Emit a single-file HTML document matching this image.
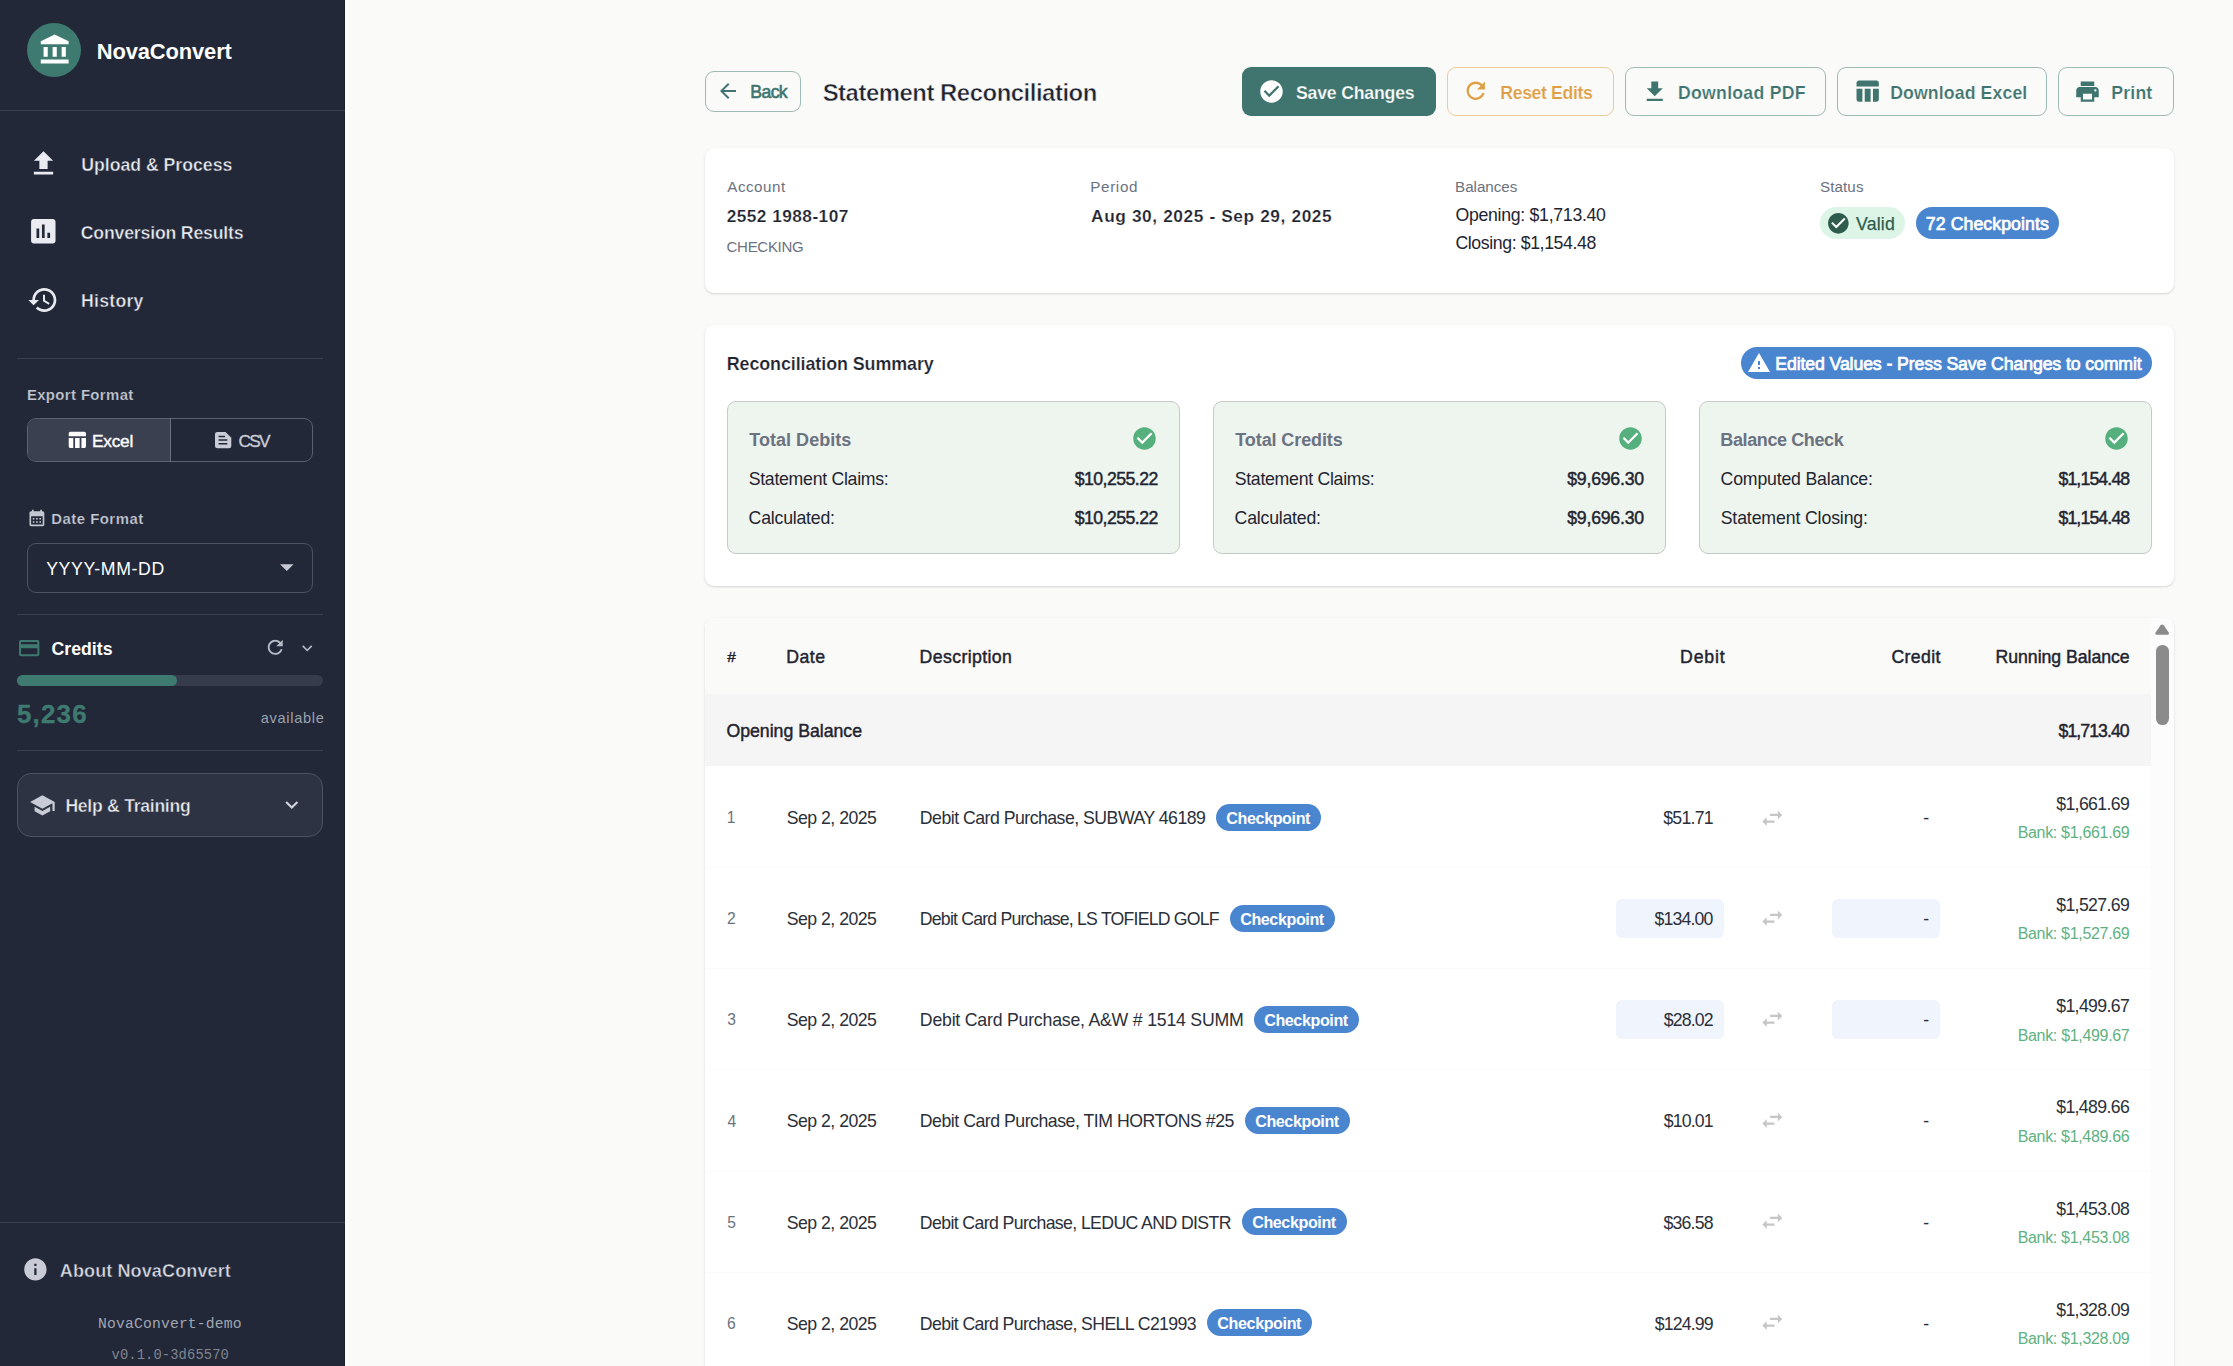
<!DOCTYPE html>
<html lang="en"><head><meta charset="utf-8"><title>NovaConvert - Statement Reconciliation</title>
<style>
html,body{margin:0;padding:0;}
body{width:2233px;height:1366px;overflow:hidden;background:#fafaf9;position:relative;font-family:"Liberation Sans",sans-serif;}
#app{position:absolute;left:0;top:0;width:2233px;height:1366px;overflow:hidden;}
.t{position:absolute;white-space:nowrap;margin:0;padding:0;}
.ls{font-family:"Liberation Sans",sans-serif;}
.lm{font-family:"Liberation Mono",monospace;}
.b{position:absolute;}
.i{position:absolute;display:block;overflow:visible;}
</style></head><body><div id="app">
<!-- table -->
<div class="b" style="left:705px;top:617.5px;width:1469.00px;height:802.50px;background:#fff;border-radius:9px;box-shadow:0 1px 3px rgba(0,0,0,.10),0 1px 2px rgba(0,0,0,.06);overflow:hidden;"></div>
<div class="b" style="left:705px;top:617.5px;width:1446.00px;height:76.80px;background:#fafaf9;border-radius:9px 0 0 0;"></div>
<div class="t ls" style="left:727.32px;top:648.00px;height:17px;line-height:17px;font-size:15.4px;letter-spacing:-0.724px;color:#1f2430;-webkit-text-stroke:0.45px #1f2430;">#</div>
<div class="t ls" style="left:786.14px;top:647.00px;height:20px;line-height:20px;font-size:17.7px;letter-spacing:0.522px;color:#1f2430;-webkit-text-stroke:0.45px #1f2430;">Date</div>
<div class="t ls" style="left:919.54px;top:647.00px;height:20px;line-height:20px;font-size:17.7px;letter-spacing:0.387px;color:#1f2430;-webkit-text-stroke:0.45px #1f2430;">Description</div>
<div class="t ls" style="left:1680.04px;top:647.00px;height:20px;line-height:20px;font-size:17.7px;letter-spacing:0.841px;color:#1f2430;-webkit-text-stroke:0.45px #1f2430;">Debit</div>
<div class="t ls" style="left:1891.51px;top:647.00px;height:20px;line-height:20px;font-size:17.7px;letter-spacing:0.341px;color:#1f2430;-webkit-text-stroke:0.45px #1f2430;">Credit</div>
<div class="t ls" style="left:1995.54px;top:647.00px;height:20px;line-height:20px;font-size:17.7px;letter-spacing:-0.041px;color:#1f2430;-webkit-text-stroke:0.45px #1f2430;">Running Balance</div>
<div class="b" style="left:705px;top:694.3px;width:1446.00px;height:71.70px;background:#f5f5f5;"></div>
<div class="t ls" style="left:726.46px;top:721.00px;height:20px;line-height:20px;font-size:17.7px;letter-spacing:-0.008px;color:#1f2430;-webkit-text-stroke:0.45px #1f2430;">Opening Balance</div>
<div class="t ls" style="left:2058.62px;top:721.00px;height:20px;line-height:20px;font-size:17.7px;letter-spacing:-0.960px;color:#1f2430;-webkit-text-stroke:0.45px #1f2430;">$1,713.40</div>
<div class="b" style="left:2151px;top:617.5px;width:23.00px;height:748.50px;background:#fcfcfc;border-radius:0 9px 0 0;"></div>
<svg class="i" style="left:2155.2px;top:624.4px;width:14.3px;height:10.8px" viewBox="0 0 14 11"><path fill="#8b8b8b" d="M5.400 1.300a2 2 0 0 1 3.200 0L13.700 8.700c.6.900.1 2.300-1.200 2.300H1.500C.2 11-.3 9.600.3 8.700z"/></svg>
<div class="b" style="left:2156px;top:645.2px;width:12.70px;height:79.40px;background:#8b8b8b;border-radius:6.4px;"></div>
<div class="t ls" style="left:726.73px;top:809.00px;height:17px;line-height:17px;font-size:15.6px;letter-spacing:-0.733px;color:#6b7280;">1</div>
<div class="t ls" style="left:786.70px;top:808.00px;height:20px;line-height:20px;font-size:17.7px;letter-spacing:-0.514px;color:#2a2f39;">Sep 2, 2025</div>
<div class="t ls" style="left:919.84px;top:808.00px;height:20px;line-height:20px;font-size:17.7px;letter-spacing:-0.513px;color:#2a2f39;">Debit Card Purchase, SUBWAY 46189</div>
<div class="b" style="left:1216.0px;top:804px;width:104.80px;height:26.80px;background:#4a86cf;border-radius:14px;"></div>
<div class="t ls" style="left:1226.36px;top:809.00px;height:18px;line-height:18px;font-size:16.1px;letter-spacing:-0.395px;color:#ffffff;font-weight:700;">Checkpoint</div>
<div class="t ls" style="left:1663.22px;top:808.00px;height:20px;line-height:20px;font-size:17.7px;letter-spacing:-0.740px;color:#2a2f39;">$51.71</div>
<svg class="i" style="left:1759.20px;top:804.50px;width:26.6px;height:26.6px" viewBox="0 0 24 24"><path fill="#c6c6c6" d="M6.99 11 3 15l3.99 4v-3H14v-2H6.99zM21 9l-3.99-4v3H10v2h7.01v3z"/></svg>
<div class="t ls" style="left:1923.24px;top:808.00px;height:20px;line-height:20px;font-size:17.7px;letter-spacing:-0.832px;color:#2a2f39;">-</div>
<div class="t ls" style="left:2056.22px;top:794.00px;height:20px;line-height:20px;font-size:17.7px;letter-spacing:-0.643px;color:#2a2f39;">$1,661.69</div>
<div class="t ls" style="left:2017.68px;top:824.00px;height:17px;line-height:17px;font-size:16.0px;letter-spacing:-0.320px;color:#5fb181;">Bank: $1,661.69</div>
<div class="b" style="left:705px;top:866.5px;width:1446.00px;height:1.00px;background:#fbfbfb;"></div>
<div class="t ls" style="left:727.12px;top:910.00px;height:17px;line-height:17px;font-size:15.6px;letter-spacing:-0.733px;color:#6b7280;">2</div>
<div class="t ls" style="left:786.70px;top:909.00px;height:20px;line-height:20px;font-size:17.7px;letter-spacing:-0.514px;color:#2a2f39;">Sep 2, 2025</div>
<div class="t ls" style="left:919.84px;top:909.00px;height:20px;line-height:20px;font-size:17.7px;letter-spacing:-0.799px;color:#2a2f39;">Debit Card Purchase, LS TOFIELD GOLF</div>
<div class="b" style="left:1229.8px;top:905px;width:104.80px;height:26.80px;background:#4a86cf;border-radius:14px;"></div>
<div class="t ls" style="left:1240.16px;top:910.00px;height:18px;line-height:18px;font-size:16.1px;letter-spacing:-0.395px;color:#ffffff;font-weight:700;">Checkpoint</div>
<div class="b" style="left:1616px;top:899px;width:108.00px;height:38.50px;background:#eff4fd;border-radius:6px;"></div>
<div class="b" style="left:1832px;top:899px;width:108.00px;height:38.50px;background:#eff4fd;border-radius:6px;"></div>
<div class="t ls" style="left:1654.51px;top:909.00px;height:20px;line-height:20px;font-size:17.7px;letter-spacing:-0.832px;color:#2a2f39;">$134.00</div>
<svg class="i" style="left:1759.20px;top:905.47px;width:26.6px;height:26.6px" viewBox="0 0 24 24"><path fill="#c6c6c6" d="M6.99 11 3 15l3.99 4v-3H14v-2H6.99zM21 9l-3.99-4v3H10v2h7.01v3z"/></svg>
<div class="t ls" style="left:1923.24px;top:909.00px;height:20px;line-height:20px;font-size:17.7px;letter-spacing:-0.832px;color:#2a2f39;">-</div>
<div class="t ls" style="left:2056.22px;top:895.00px;height:20px;line-height:20px;font-size:17.7px;letter-spacing:-0.643px;color:#2a2f39;">$1,527.69</div>
<div class="t ls" style="left:2017.68px;top:925.00px;height:17px;line-height:17px;font-size:16.0px;letter-spacing:-0.320px;color:#5fb181;">Bank: $1,527.69</div>
<div class="b" style="left:705px;top:968.0px;width:1446.00px;height:1.00px;background:#fbfbfb;"></div>
<div class="t ls" style="left:727.31px;top:1011.00px;height:17px;line-height:17px;font-size:15.6px;letter-spacing:-0.733px;color:#6b7280;">3</div>
<div class="t ls" style="left:786.70px;top:1010.00px;height:20px;line-height:20px;font-size:17.7px;letter-spacing:-0.514px;color:#2a2f39;">Sep 2, 2025</div>
<div class="t ls" style="left:919.84px;top:1010.00px;height:20px;line-height:20px;font-size:17.7px;letter-spacing:-0.210px;color:#2a2f39;">Debit Card Purchase, A&amp;W # 1514 SUMM</div>
<div class="b" style="left:1253.8px;top:1006px;width:104.80px;height:26.80px;background:#4a86cf;border-radius:14px;"></div>
<div class="t ls" style="left:1264.16px;top:1011.00px;height:18px;line-height:18px;font-size:16.1px;letter-spacing:-0.395px;color:#ffffff;font-weight:700;">Checkpoint</div>
<div class="b" style="left:1616px;top:1000px;width:108.00px;height:38.50px;background:#eff4fd;border-radius:6px;"></div>
<div class="b" style="left:1832px;top:1000px;width:108.00px;height:38.50px;background:#eff4fd;border-radius:6px;"></div>
<div class="t ls" style="left:1663.68px;top:1010.00px;height:20px;line-height:20px;font-size:17.7px;letter-spacing:-0.832px;color:#2a2f39;">$28.02</div>
<svg class="i" style="left:1759.20px;top:1006.44px;width:26.6px;height:26.6px" viewBox="0 0 24 24"><path fill="#c6c6c6" d="M6.99 11 3 15l3.99 4v-3H14v-2H6.99zM21 9l-3.99-4v3H10v2h7.01v3z"/></svg>
<div class="t ls" style="left:1923.24px;top:1010.00px;height:20px;line-height:20px;font-size:17.7px;letter-spacing:-0.832px;color:#2a2f39;">-</div>
<div class="t ls" style="left:2056.22px;top:996.00px;height:20px;line-height:20px;font-size:17.7px;letter-spacing:-0.638px;color:#2a2f39;">$1,499.67</div>
<div class="t ls" style="left:2017.68px;top:1027.00px;height:17px;line-height:17px;font-size:16.0px;letter-spacing:-0.317px;color:#5fb181;">Bank: $1,499.67</div>
<div class="b" style="left:705px;top:1069.0px;width:1446.00px;height:1.00px;background:#fbfbfb;"></div>
<div class="t ls" style="left:727.55px;top:1113.00px;height:17px;line-height:17px;font-size:15.6px;letter-spacing:-0.733px;color:#6b7280;">4</div>
<div class="t ls" style="left:786.70px;top:1111.00px;height:20px;line-height:20px;font-size:17.7px;letter-spacing:-0.514px;color:#2a2f39;">Sep 2, 2025</div>
<div class="t ls" style="left:919.84px;top:1111.00px;height:20px;line-height:20px;font-size:17.7px;letter-spacing:-0.479px;color:#2a2f39;">Debit Card Purchase, TIM HORTONS #25</div>
<div class="b" style="left:1244.8px;top:1107px;width:104.80px;height:26.80px;background:#4a86cf;border-radius:14px;"></div>
<div class="t ls" style="left:1255.16px;top:1112.00px;height:18px;line-height:18px;font-size:16.1px;letter-spacing:-0.395px;color:#ffffff;font-weight:700;">Checkpoint</div>
<div class="t ls" style="left:1663.68px;top:1111.00px;height:20px;line-height:20px;font-size:17.7px;letter-spacing:-0.832px;color:#2a2f39;">$10.01</div>
<svg class="i" style="left:1759.20px;top:1107.41px;width:26.6px;height:26.6px" viewBox="0 0 24 24"><path fill="#c6c6c6" d="M6.99 11 3 15l3.99 4v-3H14v-2H6.99zM21 9l-3.99-4v3H10v2h7.01v3z"/></svg>
<div class="t ls" style="left:1923.24px;top:1111.00px;height:20px;line-height:20px;font-size:17.7px;letter-spacing:-0.832px;color:#2a2f39;">-</div>
<div class="t ls" style="left:2056.22px;top:1097.00px;height:20px;line-height:20px;font-size:17.7px;letter-spacing:-0.649px;color:#2a2f39;">$1,489.66</div>
<div class="t ls" style="left:2017.68px;top:1128.00px;height:17px;line-height:17px;font-size:16.0px;letter-spacing:-0.323px;color:#5fb181;">Bank: $1,489.66</div>
<div class="b" style="left:705px;top:1170.5px;width:1446.00px;height:1.00px;background:#fbfbfb;"></div>
<div class="t ls" style="left:727.28px;top:1214.00px;height:17px;line-height:17px;font-size:15.6px;letter-spacing:-0.733px;color:#6b7280;">5</div>
<div class="t ls" style="left:786.70px;top:1213.00px;height:20px;line-height:20px;font-size:17.7px;letter-spacing:-0.514px;color:#2a2f39;">Sep 2, 2025</div>
<div class="t ls" style="left:919.84px;top:1213.00px;height:20px;line-height:20px;font-size:17.7px;letter-spacing:-0.616px;color:#2a2f39;">Debit Card Purchase, LEDUC AND DISTR</div>
<div class="b" style="left:1241.8px;top:1208px;width:104.80px;height:26.80px;background:#4a86cf;border-radius:14px;"></div>
<div class="t ls" style="left:1252.16px;top:1213.00px;height:18px;line-height:18px;font-size:16.1px;letter-spacing:-0.395px;color:#ffffff;font-weight:700;">Checkpoint</div>
<div class="t ls" style="left:1663.59px;top:1213.00px;height:20px;line-height:20px;font-size:17.7px;letter-spacing:-0.832px;color:#2a2f39;">$36.58</div>
<svg class="i" style="left:1759.20px;top:1208.38px;width:26.6px;height:26.6px" viewBox="0 0 24 24"><path fill="#c6c6c6" d="M6.99 11 3 15l3.99 4v-3H14v-2H6.99zM21 9l-3.99-4v3H10v2h7.01v3z"/></svg>
<div class="t ls" style="left:1923.24px;top:1213.00px;height:20px;line-height:20px;font-size:17.7px;letter-spacing:-0.832px;color:#2a2f39;">-</div>
<div class="t ls" style="left:2056.22px;top:1199.00px;height:20px;line-height:20px;font-size:17.7px;letter-spacing:-0.649px;color:#2a2f39;">$1,453.08</div>
<div class="t ls" style="left:2017.68px;top:1229.00px;height:17px;line-height:17px;font-size:16.0px;letter-spacing:-0.323px;color:#5fb181;">Bank: $1,453.08</div>
<div class="b" style="left:705px;top:1271.5px;width:1446.00px;height:1.00px;background:#fbfbfb;"></div>
<div class="t ls" style="left:727.12px;top:1315.00px;height:17px;line-height:17px;font-size:15.6px;letter-spacing:-0.733px;color:#6b7280;">6</div>
<div class="t ls" style="left:786.70px;top:1314.00px;height:20px;line-height:20px;font-size:17.7px;letter-spacing:-0.514px;color:#2a2f39;">Sep 2, 2025</div>
<div class="t ls" style="left:919.84px;top:1314.00px;height:20px;line-height:20px;font-size:17.7px;letter-spacing:-0.608px;color:#2a2f39;">Debit Card Purchase, SHELL C21993</div>
<div class="b" style="left:1207.0px;top:1309px;width:104.80px;height:26.80px;background:#4a86cf;border-radius:14px;"></div>
<div class="t ls" style="left:1217.36px;top:1314.00px;height:18px;line-height:18px;font-size:16.1px;letter-spacing:-0.395px;color:#ffffff;font-weight:700;">Checkpoint</div>
<div class="t ls" style="left:1654.65px;top:1314.00px;height:20px;line-height:20px;font-size:17.7px;letter-spacing:-0.832px;color:#2a2f39;">$124.99</div>
<svg class="i" style="left:1759.20px;top:1309.35px;width:26.6px;height:26.6px" viewBox="0 0 24 24"><path fill="#c6c6c6" d="M6.99 11 3 15l3.99 4v-3H14v-2H6.99zM21 9l-3.99-4v3H10v2h7.01v3z"/></svg>
<div class="t ls" style="left:1923.24px;top:1314.00px;height:20px;line-height:20px;font-size:17.7px;letter-spacing:-0.832px;color:#2a2f39;">-</div>
<div class="t ls" style="left:2056.22px;top:1300.00px;height:20px;line-height:20px;font-size:17.7px;letter-spacing:-0.643px;color:#2a2f39;">$1,328.09</div>
<div class="t ls" style="left:2017.68px;top:1330.00px;height:17px;line-height:17px;font-size:16.0px;letter-spacing:-0.320px;color:#5fb181;">Bank: $1,328.09</div>
<!-- top -->
<div class="b" style="left:705px;top:71px;width:95.50px;height:41.00px;border:1px solid #9fb9b4;border-radius:9px;box-sizing:border-box;"></div>
<svg class="i" style="left:716.20px;top:79.10px;width:24px;height:24px" viewBox="0 0 24 24"><path fill="#3f756e" d="M20 11H7.83l5.59-5.59L12 4l-8 8 8 8 1.41-1.41L7.83 13H20z"/></svg>
<div class="t ls" style="left:750.34px;top:82.00px;height:20px;line-height:20px;font-size:17.7px;letter-spacing:-0.659px;color:#3f756e;-webkit-text-stroke:0.6px #3f756e;">Back</div>
<div class="t ls" style="left:822.64px;top:79.00px;height:27px;line-height:27px;font-size:23.9px;letter-spacing:-0.468px;color:#1f2430;font-weight:700;-webkit-text-stroke:0.5px #fafaf9;">Statement Reconciliation</div>
<div class="b" style="left:1242px;top:67px;width:194.00px;height:48.50px;background:#3f756e;border-radius:9px;"></div>
<svg class="i" style="left:1258.00px;top:77.80px;width:27px;height:27px" viewBox="0 0 24 24"><circle cx="12" cy="12" r="8.5" fill="#3f756e"/><path fill="#ffffff" d="M12 2C6.48 2 2 6.48 2 12s4.48 10 10 10 10-4.48 10-10S17.52 2 12 2m-2 15-5-5 1.41-1.41L10 14.17l7.59-7.59L19 8z"/></svg>
<div class="t ls" style="left:1296.01px;top:83.00px;height:20px;line-height:20px;font-size:17.7px;letter-spacing:-0.208px;color:#ffffff;font-weight:700;-webkit-text-stroke:0.25px #3f756e;">Save Changes</div>
<div class="b" style="left:1447px;top:67px;width:167.00px;height:48.50px;border:1px solid #eccb9b;border-radius:9px;box-sizing:border-box;"></div>
<svg class="i" style="left:1461.75px;top:77.45px;width:27.5px;height:27.5px" viewBox="0 0 24 24"><path fill="#dfa045" d="M17.65 6.35C16.2 4.9 14.21 4 12 4c-4.42 0-7.99 3.58-7.99 8s3.57 8 7.99 8c3.73 0 6.84-2.55 7.73-6h-2.08c-.82 2.33-3.04 4-5.65 4-3.31 0-6-2.69-6-6s2.69-6 6-6c1.66 0 3.14.69 4.22 1.78L13 11h7V4z"/></svg>
<div class="t ls" style="left:1500.31px;top:83.00px;height:20px;line-height:20px;font-size:17.7px;letter-spacing:-0.377px;color:#dfa045;font-weight:700;-webkit-text-stroke:0.19px #fafaf9;">Reset Edits</div>
<div class="b" style="left:1625px;top:67px;width:201.00px;height:48.50px;border:1px solid #9fb9b4;border-radius:9px;box-sizing:border-box;"></div>
<svg class="i" style="left:1640.75px;top:77.55px;width:27.5px;height:27.5px" viewBox="0 0 24 24"><path fill="#3f756e" d="M5 20h14v-2H5zM19 9h-4V3H9v6H5l7 7z"/></svg>
<div class="t ls" style="left:1678.01px;top:83.00px;height:20px;line-height:20px;font-size:17.7px;letter-spacing:0.249px;color:#3f756e;font-weight:700;-webkit-text-stroke:0.19px #fafaf9;">Download PDF</div>
<div class="b" style="left:1837px;top:67px;width:210.00px;height:48.50px;border:1px solid #9fb9b4;border-radius:9px;box-sizing:border-box;"></div>
<svg class="i" style="left:1852.50px;top:77.30px;width:28.2px;height:28.2px" viewBox="0 0 24 24"><path fill="#3f756e" d="M10 10.02h5V21h-5zM17 21h3c1.1 0 2-.9 2-2v-9h-5zm3-18H5c-1.1 0-2 .9-2 2v3h19V5c0-1.1-.9-2-2-2M3 19c0 1.1.9 2 2 2h3V10H3z"/></svg>
<div class="t ls" style="left:1890.21px;top:83.00px;height:20px;line-height:20px;font-size:17.7px;letter-spacing:0.109px;color:#3f756e;font-weight:700;-webkit-text-stroke:0.19px #fafaf9;">Download Excel</div>
<div class="b" style="left:2058px;top:67px;width:116.00px;height:48.50px;border:1px solid #9fb9b4;border-radius:9px;box-sizing:border-box;"></div>
<svg class="i" style="left:2074.00px;top:78.20px;width:27px;height:27px" viewBox="0 0 24 24"><path fill="#3f756e" d="M19 8H5c-1.66 0-3 1.34-3 3v6h4v4h12v-4h4v-6c0-1.66-1.34-3-3-3m-3 11H8v-5h8zm3-7c-.55 0-1-.45-1-1s.45-1 1-1 1 .45 1 1-.45 1-1 1m-1-9H6v4h12z"/></svg>
<div class="t ls" style="left:2111.31px;top:83.00px;height:20px;line-height:20px;font-size:17.7px;letter-spacing:0.165px;color:#3f756e;font-weight:700;-webkit-text-stroke:0.19px #fafaf9;">Print</div>
<div class="b" style="left:705px;top:148.3px;width:1469.00px;height:144.70px;background:#fff;border-radius:9px;box-shadow:0 1px 3px rgba(0,0,0,.10),0 1px 2px rgba(0,0,0,.06);"></div>
<div class="t ls" style="left:727.26px;top:178.00px;height:17px;line-height:17px;font-size:15.2px;letter-spacing:0.507px;color:#6b7280;">Account</div>
<div class="t ls" style="left:726.69px;top:206.00px;height:20px;line-height:20px;font-size:17.3px;letter-spacing:0.446px;color:#1f2430;font-weight:700;-webkit-text-stroke:0.19px #ffffff;">2552 1988-107</div>
<div class="t ls" style="left:726.55px;top:238.00px;height:17px;line-height:17px;font-size:15.0px;letter-spacing:-0.289px;color:#6b7280;">CHECKING</div>
<div class="t ls" style="left:1090.25px;top:178.00px;height:17px;line-height:17px;font-size:15.2px;letter-spacing:0.655px;color:#6b7280;">Period</div>
<div class="t ls" style="left:1091.07px;top:206.00px;height:20px;line-height:20px;font-size:17.3px;letter-spacing:0.609px;color:#1f2430;font-weight:700;-webkit-text-stroke:0.19px #ffffff;">Aug 30, 2025 - Sep 29, 2025</div>
<div class="t ls" style="left:1455.05px;top:178.00px;height:17px;line-height:17px;font-size:15.2px;letter-spacing:-0.037px;color:#6b7280;">Balances</div>
<div class="t ls" style="left:1455.46px;top:205.00px;height:20px;line-height:20px;font-size:17.7px;letter-spacing:-0.288px;color:#1f2430;">Opening: $1,713.40</div>
<div class="t ls" style="left:1455.41px;top:233.00px;height:20px;line-height:20px;font-size:17.7px;letter-spacing:-0.390px;color:#1f2430;">Closing: $1,154.48</div>
<div class="t ls" style="left:1819.92px;top:178.00px;height:17px;line-height:17px;font-size:15.2px;letter-spacing:0.105px;color:#6b7280;">Status</div>
<div class="b" style="left:1819.8px;top:207.1px;width:85.10px;height:31.90px;background:#dcf5e6;border-radius:16px;"></div>
<svg class="i" style="left:1825.75px;top:210.85px;width:24.7px;height:24.7px" viewBox="0 0 24 24"><circle cx="12" cy="12" r="8.5" fill="#ffffff"/><path fill="#2e5d4e" d="M12 2C6.48 2 2 6.48 2 12s4.48 10 10 10 10-4.48 10-10S17.52 2 12 2m-2 15-5-5 1.41-1.41L10 14.17l7.59-7.59L19 8z"/></svg>
<div class="t ls" style="left:1856.11px;top:214.00px;height:20px;line-height:20px;font-size:17.7px;letter-spacing:0.171px;color:#2e5d4e;-webkit-text-stroke:0.25px #2e5d4e;">Valid</div>
<div class="b" style="left:1915.8px;top:207.1px;width:143.30px;height:31.90px;background:#4a86cf;border-radius:16px;"></div>
<div class="t ls" style="left:1925.82px;top:214.00px;height:20px;line-height:20px;font-size:17.7px;letter-spacing:0.077px;color:#ffffff;-webkit-text-stroke:0.72px #ffffff;">72 Checkpoints</div>
<div class="b" style="left:705px;top:324.7px;width:1469.00px;height:261.30px;background:#fff;border-radius:9px;box-shadow:0 1px 3px rgba(0,0,0,.10),0 1px 2px rgba(0,0,0,.06);"></div>
<div class="t ls" style="left:726.69px;top:354.00px;height:20px;line-height:20px;font-size:17.9px;letter-spacing:-0.081px;color:#1f2430;font-weight:700;-webkit-text-stroke:0.2px #ffffff;">Reconciliation Summary</div>
<div class="b" style="left:1740.8px;top:346.8px;width:410.90px;height:31.90px;background:#4a86cf;border-radius:16px;"></div>
<svg class="i" style="left:1747.00px;top:351.00px;width:24px;height:24px" viewBox="0 0 24 24"><path fill="#ffffff" d="M1 21h22L12 2zm12-3h-2v-2h2zm0-4h-2v-4h2z"/></svg>
<div class="t ls" style="left:1775.24px;top:354.00px;height:20px;line-height:20px;font-size:17.7px;letter-spacing:-0.113px;color:#ffffff;-webkit-text-stroke:0.72px #ffffff;">Edited Values - Press Save Changes to commit</div>
<div class="b" style="left:727px;top:401px;width:453.00px;height:153.00px;background:#eef4ee;border:1px solid #c3ccc4;border-radius:9px;box-sizing:border-box;"></div>
<div class="t ls" style="left:749.32px;top:430.00px;height:20px;line-height:20px;font-size:18.0px;letter-spacing:0.022px;color:#6b7280;font-weight:700;">Total Debits</div>
<svg class="i" style="left:1131.20px;top:425.00px;width:27px;height:27px" viewBox="0 0 24 24"><circle cx="12" cy="12" r="8.5" fill="#ffffff"/><path fill="#56b07e" d="M12 2C6.48 2 2 6.48 2 12s4.48 10 10 10 10-4.48 10-10S17.52 2 12 2m-2 15-5-5 1.41-1.41L10 14.17l7.59-7.59L19 8z"/></svg>
<div class="t ls" style="left:748.70px;top:469.00px;height:20px;line-height:20px;font-size:17.7px;letter-spacing:-0.276px;color:#1f2430;">Statement Claims:</div>
<div class="t ls" style="left:1074.72px;top:469.00px;height:20px;line-height:20px;font-size:17.7px;letter-spacing:-0.552px;color:#1f2430;-webkit-text-stroke:0.45px #1f2430;">$10,255.22</div>
<div class="t ls" style="left:748.62px;top:508.00px;height:20px;line-height:20px;font-size:17.7px;letter-spacing:-0.217px;color:#1f2430;">Calculated:</div>
<div class="t ls" style="left:1074.72px;top:508.00px;height:20px;line-height:20px;font-size:17.7px;letter-spacing:-0.552px;color:#1f2430;-webkit-text-stroke:0.45px #1f2430;">$10,255.22</div>
<div class="b" style="left:1213px;top:401px;width:453.00px;height:153.00px;background:#eef4ee;border:1px solid #c3ccc4;border-radius:9px;box-sizing:border-box;"></div>
<div class="t ls" style="left:1235.32px;top:430.00px;height:20px;line-height:20px;font-size:18.0px;letter-spacing:-0.106px;color:#6b7280;font-weight:700;">Total Credits</div>
<svg class="i" style="left:1617.20px;top:425.00px;width:27px;height:27px" viewBox="0 0 24 24"><circle cx="12" cy="12" r="8.5" fill="#ffffff"/><path fill="#56b07e" d="M12 2C6.48 2 2 6.48 2 12s4.48 10 10 10 10-4.48 10-10S17.52 2 12 2m-2 15-5-5 1.41-1.41L10 14.17l7.59-7.59L19 8z"/></svg>
<div class="t ls" style="left:1234.70px;top:469.00px;height:20px;line-height:20px;font-size:17.7px;letter-spacing:-0.276px;color:#1f2430;">Statement Claims:</div>
<div class="t ls" style="left:1567.22px;top:469.00px;height:20px;line-height:20px;font-size:17.7px;letter-spacing:-0.223px;color:#1f2430;-webkit-text-stroke:0.45px #1f2430;">$9,696.30</div>
<div class="t ls" style="left:1234.62px;top:508.00px;height:20px;line-height:20px;font-size:17.7px;letter-spacing:-0.217px;color:#1f2430;">Calculated:</div>
<div class="t ls" style="left:1567.22px;top:508.00px;height:20px;line-height:20px;font-size:17.7px;letter-spacing:-0.223px;color:#1f2430;-webkit-text-stroke:0.45px #1f2430;">$9,696.30</div>
<div class="b" style="left:1699px;top:401px;width:453.00px;height:153.00px;background:#eef4ee;border:1px solid #c3ccc4;border-radius:9px;box-sizing:border-box;"></div>
<div class="t ls" style="left:1720.29px;top:430.00px;height:20px;line-height:20px;font-size:18.0px;letter-spacing:-0.383px;color:#6b7280;font-weight:700;">Balance Check</div>
<svg class="i" style="left:2103.20px;top:425.00px;width:27px;height:27px" viewBox="0 0 24 24"><circle cx="12" cy="12" r="8.5" fill="#ffffff"/><path fill="#56b07e" d="M12 2C6.48 2 2 6.48 2 12s4.48 10 10 10 10-4.48 10-10S17.52 2 12 2m-2 15-5-5 1.41-1.41L10 14.17l7.59-7.59L19 8z"/></svg>
<div class="t ls" style="left:1720.62px;top:469.00px;height:20px;line-height:20px;font-size:17.7px;letter-spacing:-0.192px;color:#1f2430;">Computed Balance:</div>
<div class="t ls" style="left:2058.42px;top:469.00px;height:20px;line-height:20px;font-size:17.7px;letter-spacing:-0.861px;color:#1f2430;-webkit-text-stroke:0.45px #1f2430;">$1,154.48</div>
<div class="t ls" style="left:1720.70px;top:508.00px;height:20px;line-height:20px;font-size:17.7px;letter-spacing:-0.125px;color:#1f2430;">Statement Closing:</div>
<div class="t ls" style="left:2058.42px;top:508.00px;height:20px;line-height:20px;font-size:17.7px;letter-spacing:-0.861px;color:#1f2430;-webkit-text-stroke:0.45px #1f2430;">$1,154.48</div>
<!-- sidebar -->
<div class="b" style="left:0px;top:0px;width:345.00px;height:1366.00px;background:#222838;"></div>
<div class="b" style="left:344px;top:0px;width:1.00px;height:1366.00px;background:#1b1f2b;"></div>
<div class="b" style="left:345px;top:0px;width:2.50px;height:1366.00px;background:#fcfcfd;"></div>
<div class="b" style="left:27px;top:23px;width:54.00px;height:54.00px;background:#3f7a70;border-radius:50%;"></div>
<svg class="i" style="left:37.60px;top:33.30px;width:33.4px;height:33.4px" viewBox="0 0 24 24"><path fill="#ffffff" d="M4 10h3v7H4zm6.5 0h3v7h-3zM2 19h20v3H2zm15-9h3v7h-3zm-5-9L2 6v2h20V6z"/></svg>
<div class="t ls" style="left:96.82px;top:39.00px;height:25px;line-height:25px;font-size:21.9px;letter-spacing:-0.118px;color:#ffffff;font-weight:700;">NovaConvert</div>
<div class="b" style="left:0px;top:110px;width:345.00px;height:1.00px;background:#3a4050;"></div>
<svg class="i" style="left:26.90px;top:146.90px;width:33px;height:33px" viewBox="0 0 24 24"><path fill="#e9ebf1" d="M5 20h14v-2H5zm0-10h4v6h6v-6h4l-7-7z"/></svg>
<div class="t ls" style="left:81.24px;top:155.00px;height:20px;line-height:20px;font-size:17.7px;letter-spacing:-0.020px;color:#e9ebf1;font-weight:700;-webkit-text-stroke:0.4px #222838;">Upload &amp; Process</div>
<svg class="i" style="left:26.80px;top:214.80px;width:32.6px;height:32.6px" viewBox="0 0 24 24"><path fill="#e9ebf1" d="M19 3H5c-1.1 0-2 .9-2 2v14c0 1.1.9 2 2 2h14c1.1 0 2-.9 2-2V5c0-1.1-.9-2-2-2M9 17H7v-7h2zm4 0h-2V7h2zm4 0h-2v-4h2z"/></svg>
<div class="t ls" style="left:80.79px;top:223.00px;height:20px;line-height:20px;font-size:17.7px;letter-spacing:-0.193px;color:#e9ebf1;font-weight:700;-webkit-text-stroke:0.4px #222838;">Conversion Results</div>
<svg class="i" style="left:27.30px;top:284.30px;width:32px;height:32px" viewBox="0 0 24 24"><path fill="#e9ebf1" d="M13 3c-4.97 0-9 4.03-9 9H1l3.89 3.89.07.14L9 12H6c0-3.87 3.13-7 7-7s7 3.13 7 7-3.13 7-7 7c-1.93 0-3.68-.79-4.94-2.06l-1.42 1.42C8.27 19.99 10.51 21 13 21c4.97 0 9-4.03 9-9s-4.03-9-9-9m-1 5v5l4.28 2.54.72-1.21-3.5-2.08V8z"/></svg>
<div class="t ls" style="left:81.11px;top:291.00px;height:20px;line-height:20px;font-size:17.7px;letter-spacing:0.234px;color:#e9ebf1;font-weight:700;-webkit-text-stroke:0.4px #222838;">History</div>
<div class="b" style="left:17px;top:358px;width:306.00px;height:1.00px;background:#3a4050;"></div>
<div class="t ls" style="left:26.89px;top:387.00px;height:16px;line-height:16px;font-size:14.9px;letter-spacing:0.388px;color:#c3c7d1;font-weight:700;-webkit-text-stroke:0.2px #222838;">Export Format</div>
<div class="b" style="left:27px;top:418px;width:286.00px;height:44.00px;border:1px solid #5b6172;border-radius:9px;box-sizing:border-box;"></div>
<div class="b" style="left:28px;top:419px;width:142.00px;height:42.00px;background:#3b4050;border-radius:8px 0 0 8px;"></div>
<div class="b" style="left:170px;top:418px;width:1.00px;height:44.00px;background:#6a7080;"></div>
<svg class="i" style="left:66.40px;top:429.00px;width:21.8px;height:21.8px" viewBox="0 0 24 24"><path fill="#ffffff" d="M10 10.02h5V21h-5zM17 21h3c1.1 0 2-.9 2-2v-9h-5zm3-18H5c-1.1 0-2 .9-2 2v3h19V5c0-1.1-.9-2-2-2M3 19c0 1.1.9 2 2 2h3V10H3z"/></svg>
<div class="t ls" style="left:92.07px;top:431.00px;height:20px;line-height:20px;font-size:17.3px;letter-spacing:-0.251px;color:#ffffff;-webkit-text-stroke:0.4px #ffffff;">Excel</div>
<svg class="i" style="left:214.7px;top:431.7px;width:16.3px;height:16.3px" viewBox="0 0 16 16"><path fill="#c9ccd6" d="M2.200 0H10.400L16 5.600V13.800Q16 16 13.800 16H2.200Q0 16 0 13.800V2.200Q0 0 2.200 0z"/><path fill="#222838" d="M3.500 3.600h6.300v1.500H3.500zM3.500 7.200h8.600v1.500H3.500zM3.500 10.800h8.600v1.500H3.500z"/></svg>
<div class="t ls" style="left:238.44px;top:431.00px;height:20px;line-height:20px;font-size:17.3px;letter-spacing:-1.722px;color:#c9ccd6;-webkit-text-stroke:0.35px #c9ccd6;">CSV</div>
<svg class="i" style="left:26.55px;top:508.10px;width:19.8px;height:19.8px" viewBox="0 0 24 24"><path fill="#c3c7d1" d="M19 4h-1V2h-2v2H8V2H6v2H5c-1.11 0-1.99.9-1.99 2L3 20c0 1.1.89 2 2 2h14c1.1 0 2-.9 2-2V6c0-1.1-.9-2-2-2m0 16H5V10h14zM9 14H7v-2h2zm4 0h-2v-2h2zm4 0h-2v-2h2zm-8 4H7v-2h2zm4 0h-2v-2h2zm4 0h-2v-2h2z"/></svg>
<div class="t ls" style="left:51.19px;top:511.00px;height:16px;line-height:16px;font-size:14.9px;letter-spacing:0.511px;color:#c3c7d1;font-weight:700;-webkit-text-stroke:0.2px #222838;">Date Format</div>
<div class="b" style="left:27px;top:543.3px;width:286.00px;height:49.40px;border:1px solid #4d5364;border-radius:9px;box-sizing:border-box;"></div>
<div class="t ls" style="left:46.20px;top:559.00px;height:20px;line-height:20px;font-size:17.7px;letter-spacing:0.633px;color:#ffffff;">YYYY-MM-DD</div>
<svg class="i" style="left:280.3px;top:564px;width:13.6px;height:7.2px" viewBox="0 0 10 5"><path fill="#c6c9d4" d="M0 0h10L5 5z"/></svg>
<div class="b" style="left:17px;top:614px;width:306.00px;height:1.00px;background:#3a4050;"></div>
<svg class="i" style="left:16.80px;top:635.80px;width:24.4px;height:24.4px" viewBox="0 0 24 24"><path fill="#3f7a70" d="M20 4H4c-1.11 0-1.99.89-1.99 2L2 18c0 1.11.89 2 2 2h16c1.11 0 2-.89 2-2V6c0-1.11-.89-2-2-2m0 14H4v-6h16zm0-10H4V6h16z"/></svg>
<div class="t ls" style="left:51.49px;top:639.00px;height:20px;line-height:20px;font-size:17.7px;letter-spacing:0.007px;color:#ffffff;font-weight:700;">Credits</div>
<svg class="i" style="left:263.85px;top:636.45px;width:22.5px;height:22.5px" viewBox="0 0 24 24"><path fill="#b6bac6" d="M17.65 6.35C16.2 4.9 14.21 4 12 4c-4.42 0-7.99 3.58-7.99 8s3.57 8 7.99 8c3.73 0 6.84-2.55 7.73-6h-2.08c-.82 2.33-3.04 4-5.65 4-3.31 0-6-2.69-6-6s2.69-6 6-6c1.66 0 3.14.69 4.22 1.78L13 11h7V4z"/></svg>
<svg class="i" style="left:296.60px;top:637.50px;width:20.4px;height:20.4px" viewBox="0 0 24 24"><path fill="#b6bac6" d="M16.59 8.59 12 13.17 7.41 8.59 6 10l6 6 6-6z"/></svg>
<div class="b" style="left:16.8px;top:675px;width:306.10px;height:10.80px;background:#363c4c;border-radius:6px;"></div>
<div class="b" style="left:16.8px;top:675px;width:160.00px;height:10.80px;background:#3f7a70;border-radius:6px;"></div>
<div class="t ls" style="left:16.92px;top:700.00px;height:28px;line-height:28px;font-size:25.9px;letter-spacing:1.217px;color:#3f7a70;font-weight:700;-webkit-text-stroke:0.35px #3f7a70;">5,236</div>
<div class="t ls" style="left:260.78px;top:710.00px;height:16px;line-height:16px;font-size:14.6px;letter-spacing:0.676px;color:#9ba1ae;">available</div>
<div class="b" style="left:17px;top:750px;width:306.00px;height:1.00px;background:#3a4050;"></div>
<div class="b" style="left:17px;top:773px;width:306.00px;height:64.00px;background:#2d3343;border:1px solid #4c5263;border-radius:14px;box-sizing:border-box;"></div>
<svg class="i" style="left:28.70px;top:791.60px;width:26.8px;height:26.8px" viewBox="0 0 24 24"><path fill="#c9ccd6" d="M5 13.18v4L12 21l7-3.82v-4L12 17zM12 3 1 9l11 6 9-4.91V17h2V9z"/></svg>
<div class="t ls" style="left:65.41px;top:796.00px;height:20px;line-height:20px;font-size:17.6px;letter-spacing:-0.266px;color:#e9ebf1;font-weight:700;-webkit-text-stroke:0.4px #2d3343;">Help &amp; Training</div>
<svg class="i" style="left:278.60px;top:791.90px;width:25.6px;height:25.6px" viewBox="0 0 24 24"><path fill="#d0d3dc" d="M16.59 8.59 12 13.17 7.41 8.59 6 10l6 6 6-6z"/></svg>
<div class="b" style="left:0px;top:1222px;width:345.00px;height:1.00px;background:#3a4050;"></div>
<svg class="i" style="left:22.00px;top:1256.10px;width:26.8px;height:26.8px" viewBox="0 0 24 24"><path fill="#c9ccd6" d="M12 2C6.48 2 2 6.48 2 12s4.48 10 10 10 10-4.48 10-10S17.52 2 12 2m1 15h-2v-6h2zm0-8h-2V7h2z"/></svg>
<div class="t ls" style="left:59.75px;top:1261.00px;height:20px;line-height:20px;font-size:18.1px;letter-spacing:0.073px;color:#d6d9e0;font-weight:700;-webkit-text-stroke:0.4px #222838;">About NovaConvert</div>
<div class="t lm" style="left:98.01px;top:1316.00px;height:16px;line-height:16px;font-size:14.7px;letter-spacing:0.173px;color:#a1a6b2;">NovaConvert-demo</div>
<div class="t lm" style="left:111.50px;top:1348.00px;height:15px;line-height:15px;font-size:13.8px;letter-spacing:0.109px;color:#7f8592;">v0.1.0-3d65570</div>
</div></body></html>
